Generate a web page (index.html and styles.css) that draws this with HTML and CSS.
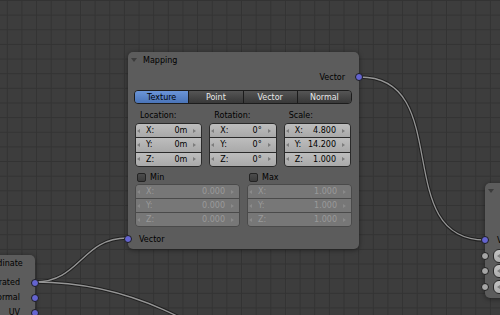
FILE: index.html
```html
<!DOCTYPE html>
<html>
<head>
<meta charset="utf-8">
<title>Node Editor</title>
<link rel="stylesheet" href="styles.css">
</head>
<body>
<div class="editor">
  <svg class="wires" width="500" height="315" viewBox="0 0 500 315">
    <defs>
      <pattern id="grid" width="14.64" height="14.64" patternUnits="userSpaceOnUse" x="6.8" y="0">
        <path d="M0.5 0V14.64M0 0.5H14.64" stroke="#333333" stroke-width="1" fill="none"/>
      </pattern>
    </defs>
    <rect width="500" height="315" fill="url(#grid)"/>
    <g class="wire-outline">
      <path d="M360 77C455 77 390 240 485 240"/>
      <path d="M35 282C80 282 82 238 127 238"/>
      <path d="M35 282C235 282 300 460 500 460"/>
    </g>
    <g class="wire-core">
      <path d="M360 77C455 77 390 240 485 240"/>
      <path d="M35 282C80 282 82 238 127 238"/>
      <path d="M35 282C235 282 300 460 500 460"/>
    </g>
  </svg>

  <div class="node mapping">
    <div class="node-head"><span class="tri"></span><span class="title">Mapping</span></div>
    <div class="sock-row out">Vector<span class="socket vec right"></span></div>
    <div class="radio">
      <span class="on">Texture</span><span>Point</span><span>Vector</span><span>Normal</span>
    </div>
    <div class="cols3 labels"><span>Location:</span><span>Rotation:</span><span>Scale:</span></div>
    <div class="cols3 fields">
      <div class="numcol">
        <div class="num"><i class="al"></i><span class="k">X:</span><span class="v">0m</span><i class="ar"></i></div>
        <div class="num"><i class="al"></i><span class="k">Y:</span><span class="v">0m</span><i class="ar"></i></div>
        <div class="num"><i class="al"></i><span class="k">Z:</span><span class="v">0m</span><i class="ar"></i></div>
      </div>
      <div class="numcol">
        <div class="num"><i class="al"></i><span class="k">X:</span><span class="v">0°</span><i class="ar"></i></div>
        <div class="num"><i class="al"></i><span class="k">Y:</span><span class="v">0°</span><i class="ar"></i></div>
        <div class="num"><i class="al"></i><span class="k">Z:</span><span class="v">0°</span><i class="ar"></i></div>
      </div>
      <div class="numcol">
        <div class="num"><i class="al"></i><span class="k">X:</span><span class="v">4.800</span><i class="ar"></i></div>
        <div class="num"><i class="al"></i><span class="k">Y:</span><span class="v">14.200</span><i class="ar"></i></div>
        <div class="num"><i class="al"></i><span class="k">Z:</span><span class="v">1.000</span><i class="ar"></i></div>
      </div>
    </div>
    <div class="cols2 checks">
      <label class="chk"><span class="box"></span>Min</label>
      <label class="chk"><span class="box"></span>Max</label>
    </div>
    <div class="cols2 fields dis">
      <div class="numcol">
        <div class="num"><i class="al"></i><span class="k">X:</span><span class="v">0.000</span><i class="ar"></i></div>
        <div class="num"><i class="al"></i><span class="k">Y:</span><span class="v">0.000</span><i class="ar"></i></div>
        <div class="num"><i class="al"></i><span class="k">Z:</span><span class="v">0.000</span><i class="ar"></i></div>
      </div>
      <div class="numcol">
        <div class="num"><i class="al"></i><span class="k">X:</span><span class="v">1.000</span><i class="ar"></i></div>
        <div class="num"><i class="al"></i><span class="k">Y:</span><span class="v">1.000</span><i class="ar"></i></div>
        <div class="num"><i class="al"></i><span class="k">Z:</span><span class="v">1.000</span><i class="ar"></i></div>
      </div>
    </div>
    <div class="sock-row in"><span class="socket vec left"></span>Vector</div>
  </div>

  <div class="node texcoord">
    <div class="node-head"><span class="tri"></span><span class="title">Texture Coordinate</span></div>
    <div class="tc-rows">
      <div class="sock-row out tc">Generated<span class="socket vec right"></span></div>
      <div class="sock-row out tc">Normal<span class="socket vec right"></span></div>
      <div class="sock-row out tc">UV<span class="socket vec right"></span></div>
    </div>
  </div>

  <div class="node target">
    <div class="node-head"><span class="tri"></span><span class="title">Mapping</span></div>
    <div class="spacer"></div>
    <div class="sock-row in tg">Vector<span class="socket vec left"></span></div>
    <div class="tg-fields">
      <div class="tg-row"><span class="socket val left"></span><div class="pill"><i class="al"></i></div></div>
      <div class="tg-row"><span class="socket val left"></span><div class="pill"><i class="al"></i></div></div>
      <div class="tg-row"><span class="socket val left"></span><div class="pill"><i class="al"></i></div></div>
    </div>
  </div>
</div>
</body>
</html>
```

FILE: styles.css
```css
* { box-sizing: border-box; }

body {
  margin: 0;
  background: #3d3d3d;
  font-family: "DejaVu Sans", "Liberation Sans", sans-serif;
  font-size: 8px;
  color: #000;
}

.editor {
  position: relative;
  width: 500px;
  height: 315px;
  overflow: hidden;
  background: #3d3d3d;
}

.wires { position: absolute; left: 0; top: 0; }
.wire-outline path { fill: none; stroke: #202020; stroke-width: 3.4; }
.wire-core path { fill: none; stroke: #959595; stroke-width: 1.3; }

.node {
  position: absolute;
  background: #5c5c5c;
  border-radius: 5px;
  box-shadow: 0 1px 5px rgba(0, 0, 0, 0.45);
  display: flex;
  flex-direction: column;
}

.node-head {
  height: 16px;
  display: flex;
  align-items: center;
  padding-left: 3px;
  flex: none;
}

.tri {
  width: 0;
  height: 0;
  border-left: 3px solid transparent;
  border-right: 3px solid transparent;
  border-top: 4px solid #3c3c3c;
  margin-right: 6px;
}

.title { white-space: nowrap; }

.sock-row {
  height: 14px;
  display: flex;
  align-items: center;
  position: relative;
  white-space: nowrap;
  flex: none;
}

.sock-row.out { justify-content: flex-end; padding-right: 14px; margin-top: 2px; }
.sock-row.in { padding-left: 11px; margin-top: 5px; }

.socket {
  position: absolute;
  top: 50%;
  width: 8px;
  height: 8px;
  margin-top: -4px;
  border-radius: 50%;
  border: 1px solid #1d1d1d;
}
.socket.right { right: -4px; }
.socket.left { left: -4px; }
.socket.vec { background: #6464d0; }
.socket.val { background: #a6a6a6; }

/* Mapping node */
.mapping { left: 128px; top: 52px; width: 231px; height: 197px; }

.radio {
  margin: 6px 7px 0 6px;
  height: 14px;
  display: flex;
  border: 1px solid #1c1c1c;
  border-radius: 4px;
  overflow: hidden;
  flex: none;
}
.radio span {
  flex: 1;
  display: flex;
  align-items: center;
  justify-content: center;
  color: #e8e8e8;
  background: linear-gradient(#555555, #383838);
  border-left: 1px solid #1c1c1c;
}
.radio span:first-child { border-left: 0; }
.radio span.on { background: linear-gradient(#6b95d8, #4a74b8); color: #000; }

.cols3 { display: grid; grid-template-columns: repeat(3, 1fr); gap: 7px; margin: 0 8px 0 7px; flex: none; }
.cols2 { display: grid; grid-template-columns: repeat(2, 1fr); gap: 7px; margin: 0 7px 0 7px; flex: none; }

.labels { margin-top: 4px; height: 15px; align-items: center; }
.labels span { padding-left: 5px; }

.fields { height: 44px; }

.numcol {
  display: flex;
  flex-direction: column;
  border: 1px solid #2a2a2a;
  border-radius: 4px;
  overflow: hidden;
}
.num {
  flex: 1;
  display: flex;
  align-items: center;
  padding: 0 5px 0 1px;
  background: linear-gradient(#bdbdbd, #a9a9a9);
  white-space: nowrap;
}
.num + .num { border-top: 1px solid #2a2a2a; }
.k { margin-left: 6px; }
.v { margin-left: auto; margin-right: 6px; }

.al, .ar {
  width: 0;
  height: 0;
  border-top: 2.5px solid transparent;
  border-bottom: 2.5px solid transparent;
  flex: none;
}
.al { border-right: 3px solid #7d7d7d; }
.ar { border-left: 3px solid #7d7d7d; }

.checks { margin-top: 4px; height: 12px; }
.chk { display: flex; align-items: center; }
.box {
  width: 9px;
  height: 9px;
  margin: 0 4px 0 2px;
  border: 1px solid #232323;
  border-radius: 2px;
  background: linear-gradient(#4c4c4c, #3b3b3b);
}

.dis { margin-top: 1px; height: 43px; }
.dis .numcol { border-color: #4a4a4a; }
.dis .num { background: #777777; color: #9a9a9a; }
.dis .num + .num { border-top-color: #4a4a4a; }
.dis .al { border-right-color: #8a8a8a; }
.dis .ar { border-left-color: #8a8a8a; }

/* Texture Coordinate node (partly off-screen) */
.texcoord { left: -68px; top: 255px; width: 103px; height: 80px; }
.tc-rows { margin-top: 4px; display: flex; flex-direction: column; }
.sock-row.out.tc { height: 15px; margin-top: 0; padding-right: 15px; }

/* Target node (partly off-screen) */
.target { left: 485px; top: 183px; width: 100px; height: 115px; }
.spacer { height: 34px; flex: none; }
.sock-row.in.tg { margin-top: 0; padding-left: 12px; }
.tg-fields { display: flex; flex-direction: column; margin-top: 1px; }
.tg-row { position: relative; height: 15.5px; display: flex; align-items: center; }
.pill {
  margin-left: 8px;
  width: 40px;
  height: 14px;
  border: 1px solid #2a2a2a;
  border-radius: 6px;
  background: linear-gradient(#c4c4c4, #acacac);
  display: flex;
  align-items: center;
  padding-left: 3px;
}
```
